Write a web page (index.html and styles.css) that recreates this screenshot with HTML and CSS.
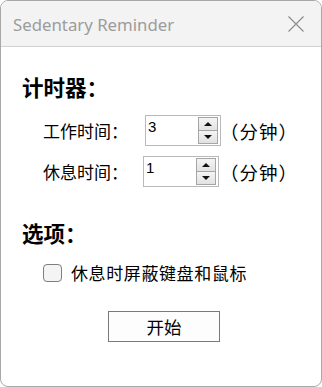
FILE: index.html
```html
<!DOCTYPE html>
<html lang="zh-CN">
<head>
<meta charset="utf-8">
<title>Sedentary Reminder</title>
<link rel="stylesheet" href="styles.css">
</head>
<body>
<div class="window">
  <div class="titlebar">
    <span class="title">Sedentary Reminder</span>
    <svg class="close" width="16" height="16" viewBox="0 0 16 16"><path d="M0.5 0.5 L15.5 15.5 M15.5 0.5 L0.5 15.5" stroke="#8a8a8a" stroke-width="1.1" fill="none"/></svg>
  </div>
  <div class="content">
    <div class="heading">计时器：</div>
    <div class="field first">
      <span class="label">工作时间：</span>
      <div class="spin">
        <span class="value">3</span>
        <div class="buttons">
          <div class="btn"><span class="arrow up"></span></div>
          <div class="btn"><span class="arrow down"></span></div>
        </div>
      </div>
      <span class="unit">（分钟）</span>
    </div>
    <div class="field second">
      <span class="label">休息时间：</span>
      <div class="spin">
        <span class="value">1</span>
        <div class="buttons">
          <div class="btn"><span class="arrow up"></span></div>
          <div class="btn"><span class="arrow down"></span></div>
        </div>
      </div>
      <span class="unit">（分钟）</span>
    </div>
    <div class="heading options">选项：</div>
    <label class="check">
      <span class="box"></span>
      <span class="check-text">休息时屏蔽键盘和鼠标</span>
    </label>
    <div class="actions">
      <button class="start">开始</button>
    </div>
  </div>
</div>
</body>
</html>
```

FILE: styles.css
```css
html, body {
  margin: 0;
  padding: 0;
  background: #ffffff;
}

.window {
  width: 322px;
  height: 387px;
  box-sizing: border-box;
  border: 1px solid #a8a8a8;
  border-radius: 8px;
  overflow: hidden;
  background: #ffffff;
  font-family: "Noto Sans CJK SC", "Noto Sans", sans-serif;
  color: #000;
}

.titlebar {
  height: 46px;
  background: #f3f3f3;
  border-bottom: 1px solid #d2d2d2;
  display: flex;
  align-items: center;
  justify-content: space-between;
  padding: 1px 17px 0 12px;
  box-sizing: border-box;
}

.title {
  font-family: "Noto Sans", sans-serif;
  font-size: 16.8px;
  color: #9c9c9c;
}

.close {
  display: block;
}

.content {
  padding: 27px 0 0 21px;
  display: flex;
  flex-direction: column;
  align-items: flex-start;
}

.heading {
  font-size: 21.5px;
  font-weight: bold;
  height: 26px;
  line-height: 26px;
}

.field {
  display: flex;
  align-items: center;
  height: 31px;
  padding-left: 21px;
}

.field.first {
  margin-top: 15px;
}

.field.second {
  margin-top: 10px;
}

.label {
  font-size: 17px;
  width: 102px;
  line-height: 20px;
}

.spin {
  width: 76px;
  height: 31px;
  box-sizing: border-box;
  border: 1px solid #b9b9b9;
  background: #fff;
  display: flex;
  align-items: stretch;
  justify-content: space-between;
  padding: 1px 2px 1px 2px;
}

.second .spin {
  margin-left: -2px;
  margin-right: 2px;
}

.value {
  font-family: "Liberation Sans", sans-serif;
  font-size: 15px;
  line-height: 18px;
  padding-top: 1px;
}

.buttons {
  width: 20px;
  display: flex;
  flex-direction: column;
}

.btn {
  flex: 1;
  border: 1px solid #a6a6a6;
  background: linear-gradient(#f4f4f4, #e2e2e2);
  display: flex;
  align-items: center;
  justify-content: center;
}

.btn + .btn {
  border-top: none;
}

.arrow {
  width: 0;
  height: 0;
  border-left: 4px solid transparent;
  border-right: 4px solid transparent;
}

.arrow.up {
  border-bottom: 4px solid #111;
}

.arrow.down {
  border-top: 4px solid #111;
}

.unit {
  font-size: 18.5px;
  letter-spacing: 1px;
  line-height: 20px;
  margin-left: -1px;
}

.heading.options {
  margin-top: 33px;
}

.check {
  display: flex;
  align-items: center;
  height: 24px;
  margin-top: 15px;
  padding-left: 21px;
}

.box {
  width: 19px;
  height: 18px;
  box-sizing: border-box;
  border: 1px solid #7e7e7e;
  border-radius: 4px;
  background: #f4f4f4;
}

.check-text {
  font-size: 17px;
  letter-spacing: 0.6px;
  margin-left: 9px;
  line-height: 20px;
}

.actions {
  margin-top: 26px;
  padding-left: 86px;
}

.start {
  width: 112px;
  height: 31px;
  box-sizing: border-box;
  border: 1px solid #7a7a7a;
  background: #fdfdfd;
  font-family: "Noto Sans CJK SC", sans-serif;
  font-size: 17.5px;
  color: #000;
  padding: 0;
  border-radius: 0;
}
```
